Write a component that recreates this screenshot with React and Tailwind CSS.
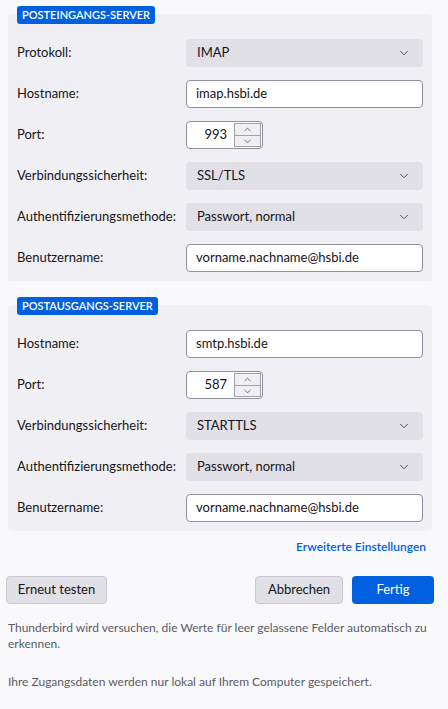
import { ChevronDown, ChevronUp } from "lucide-react";

function Badge({ children }) {
  return (
    <div className="relative z-10 ml-[17px] block w-fit rounded-[3px] bg-[#0060df] px-[5px] text-[11px] font-semibold leading-[18px] text-white">
      {children}
    </div>
  );
}

function Row({ label, children }) {
  return (
    <div className="flex h-[28px] items-center">
      <span className="w-[169px] shrink-0 text-[13px] text-[#15141a]">{label}</span>
      <div className="flex-1">{children}</div>
    </div>
  );
}

function Select({ value }) {
  return (
    <div className="flex h-[28px] items-center justify-between rounded-[4px] bg-[#e0e0e6] pl-[11px] pr-[12px] text-[13px] text-[#15141a]">
      <span>{value}</span>
      <ChevronDown size={14} strokeWidth={1.5} className="text-[#3a3944]" />
    </div>
  );
}

function TextInput({ value }) {
  return (
    <div className="flex h-[28px] items-center rounded-[4px] border border-[#8f8f9d] bg-white pl-[9px] text-[13px] text-[#15141a]">
      {value}
    </div>
  );
}

function PortInput({ value }) {
  return (
    <div className="flex h-[28px] w-[77px] items-center rounded-[4px] border border-[#8f8f9d] bg-white">
      <span className="flex-1 pr-[7px] text-right text-[13px] text-[#15141a]">{value}</span>
      <div className="mr-[1px] flex h-[24px] w-[27px] flex-col border border-[#a0a0a8] bg-[#f0f0f4]">
        <div className="flex flex-1 items-center justify-center border-b border-[#a0a0a8]">
          <ChevronUp size={11} strokeWidth={1.5} className="text-[#3a3944]" />
        </div>
        <div className="flex flex-1 items-center justify-center">
          <ChevronDown size={11} strokeWidth={1.5} className="text-[#3a3944]" />
        </div>
      </div>
    </div>
  );
}

function Panel({ children }) {
  return (
    <div className="-mt-[10px] ml-[8px] mr-[16px] flex flex-col gap-[13px] rounded-[4px] bg-[#f0f0f4] pb-[9px] pl-[9px] pr-[9px] pt-[25px]">
      {children}
    </div>
  );
}

export default function App() {
  return (
    <div className="h-[709px] w-[448px] overflow-hidden bg-[#f9f9fb] pt-[6px] font-['Lato',sans-serif] text-[#15141a]">
      <Badge>POSTEINGANGS-SERVER</Badge>
      <Panel>
        <Row label="Protokoll:"><Select value="IMAP" /></Row>
        <Row label="Hostname:"><TextInput value="imap.hsbi.de" /></Row>
        <Row label="Port:"><PortInput value="993" /></Row>
        <Row label="Verbindungssicherheit:"><Select value="SSL/TLS" /></Row>
        <Row label="Authentifizierungsmethode:"><Select value="Passwort, normal" /></Row>
        <Row label="Benutzername:"><TextInput value="vorname.nachname@hsbi.de" /></Row>
      </Panel>

      <div className="mt-[16px]">
        <Badge>POSTAUSGANGS-SERVER</Badge>
      </div>
      <Panel>
        <Row label="Hostname:"><TextInput value="smtp.hsbi.de" /></Row>
        <Row label="Port:"><PortInput value="587" /></Row>
        <Row label="Verbindungssicherheit:"><Select value="STARTTLS" /></Row>
        <Row label="Authentifizierungsmethode:"><Select value="Passwort, normal" /></Row>
        <Row label="Benutzername:"><TextInput value="vorname.nachname@hsbi.de" /></Row>
      </Panel>

      <div className="mt-[7px] flex justify-end pr-[22px]">
        <span className="text-[12px] font-semibold text-[#0060df]">Erweiterte Einstellungen</span>
      </div>

      <div className="mt-[20px] flex items-center pl-[6px] pr-[14px]">
        <button className="h-[28px] w-[101px] rounded-[4px] border border-[#c8c8ce] bg-[#e0e0e6] text-[13px] text-[#15141a]">
          Erneut testen
        </button>
        <div className="flex-1" />
        <button className="h-[28px] w-[88px] rounded-[4px] border border-[#c8c8ce] bg-[#e0e0e6] text-[13px] text-[#15141a]">
          Abbrechen
        </button>
        <button className="ml-[9px] h-[28px] w-[82px] rounded-[4px] bg-[#0060df] text-[13px] text-white">
          Fertig
        </button>
      </div>

      <p className="mt-[16px] px-[8px] text-[12px] leading-[16px] text-[#5b5b66]">
        Thunderbird wird versuchen, die Werte für leer gelassene Felder automatisch zu erkennen.
      </p>
      <p className="mt-[22px] px-[8px] text-[12px] leading-[16px] text-[#5b5b66]">
        Ihre Zugangsdaten werden nur lokal auf Ihrem Computer gespeichert.
      </p>
    </div>
  );
}
